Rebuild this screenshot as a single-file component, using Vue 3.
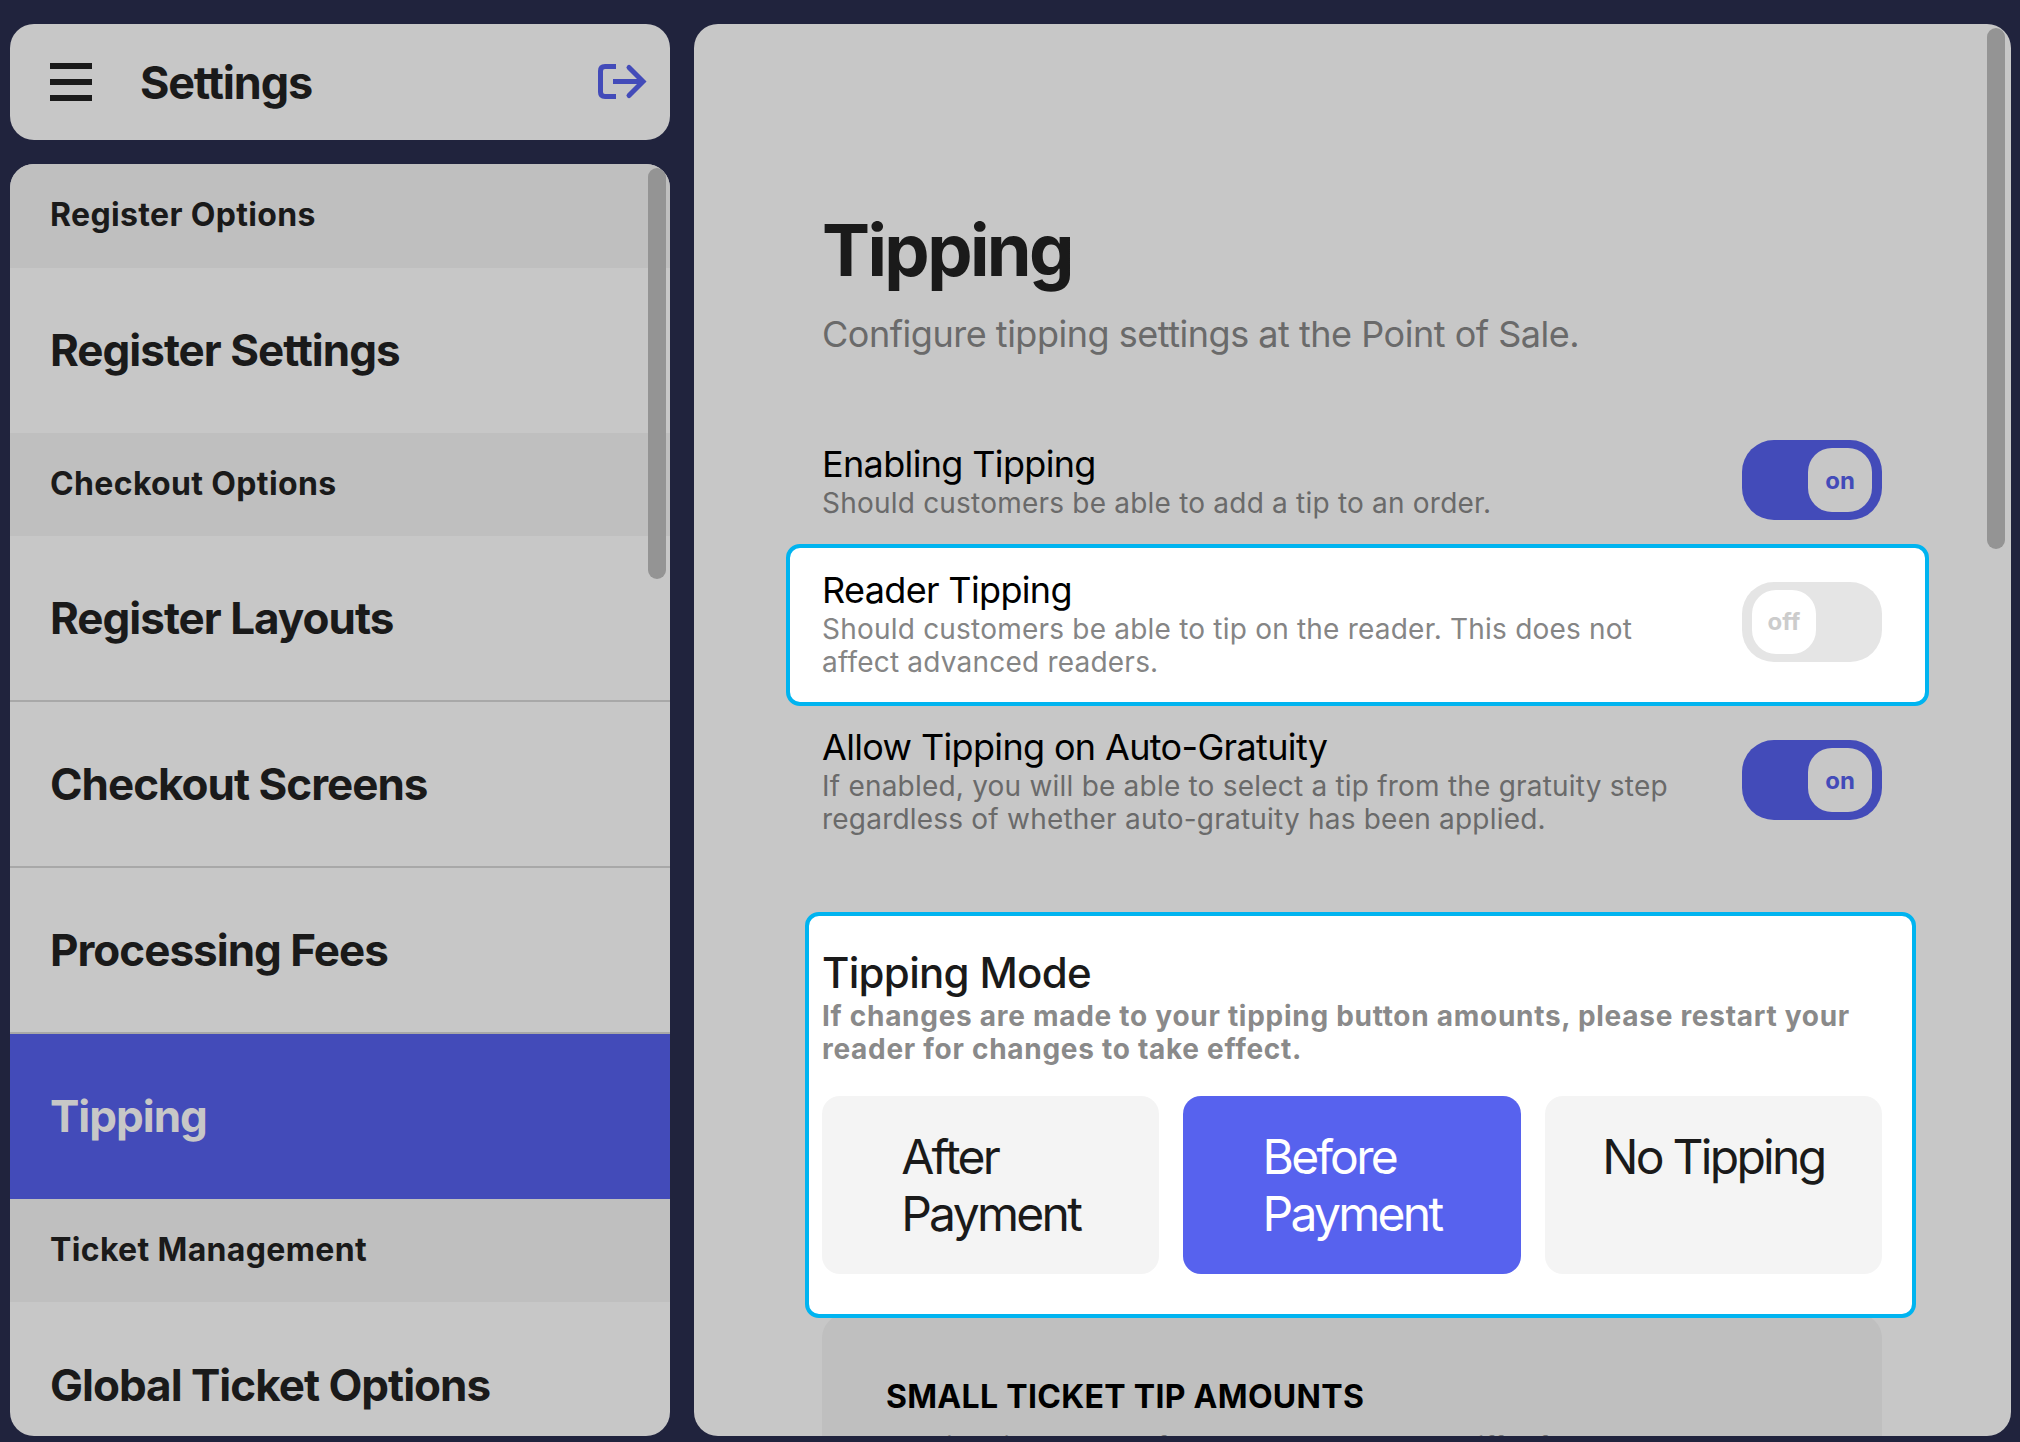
<template>
  <div class="page">
    <aside class="side">
      <header class="head">
        <div class="burger"><i></i><i></i><i></i></div>
        <h2>Settings</h2>
        <svg class="exit" viewBox="0 0 50 40" width="50" height="40" fill="none" stroke="#434bb9" stroke-width="5">
          <path d="M19 4.500H8Q3.500 4.500 3.500 9V30Q3.500 34.500 8 34.500H19" />
          <path d="M16 19.500H45" />
          <path d="M32 5.500L46 19.500L32 33.500" stroke-linecap="round" />
        </svg>
      </header>
      <nav class="list">
        <template v-for="row in rows" :key="row.label">
          <div v-if="row.section" class="section">{{ row.label }}</div>
          <div v-else class="item" :class="{ active: row.active, line: row.line }">{{ row.label }}</div>
        </template>
        <div class="bar side-bar"></div>
      </nav>
    </aside>

    <main class="main">
      <div class="bar main-bar"></div>
      <h1>Tipping</h1>
      <p class="sub">Configure tipping settings at the Point of Sale.</p>

      <div class="opt first">
        <div class="opt-text">
          <h3>Enabling Tipping</h3>
          <p>Should customers be able to add a tip to an order.</p>
        </div>
        <div class="toggle on"><span>on</span></div>
      </div>

      <div class="opt hl">
        <div class="opt-text">
          <h3>Reader Tipping</h3>
          <p>Should customers be able to tip on the reader. This does not affect advanced readers.</p>
        </div>
        <div class="toggle"><span>off</span></div>
      </div>

      <div class="opt">
        <div class="opt-text">
          <h3>Allow Tipping on Auto-Gratuity</h3>
          <p>If enabled, you will be able to select a tip from the gratuity step regardless of whether auto-gratuity has been applied.</p>
        </div>
        <div class="toggle on"><span>on</span></div>
      </div>

      <section class="mode">
        <h3>Tipping Mode</h3>
        <p>If changes are made to your tipping button amounts, please restart your reader for changes to take effect.</p>
        <div class="modes">
          <button v-for="m in modes" :key="m.label" :class="{ picked: m.picked }"><span>{{ m.label }}</span></button>
        </div>
      </section>

      <section class="amounts">
        <h4>SMALL TICKET TIP AMOUNTS</h4>
        <p>Provide tip amounts for small orders, these differ from the</p>
      </section>
    </main>
  </div>
</template>

<script setup>
const rows = [
  { label: 'Register Options', section: true },
  { label: 'Register Settings' },
  { label: 'Checkout Options', section: true },
  { label: 'Register Layouts', line: true },
  { label: 'Checkout Screens', line: true },
  { label: 'Processing Fees', line: true },
  { label: 'Tipping', active: true },
  { label: 'Ticket Management', section: true },
  { label: 'Global Ticket Options' }
]

const modes = [
  { label: 'After\nPayment' },
  { label: 'Before\nPayment', picked: true },
  { label: 'No Tipping' }
]
</script>

<style>
html, body { background: #20233d; overflow: hidden; }
</style>

<style scoped>
.page {
  display: flex;
  gap: 24px;
  height: 1442px;
  box-sizing: border-box;
  padding: 24px 9px 6px 10px;
  background: #20233d;
  font-family: Inter, "Liberation Sans", sans-serif;
  color: #1a1a1a;
}
.side {
  width: 660px;
  flex: none;
  display: flex;
  flex-direction: column;
  gap: 24px;
}
.head {
  height: 116px;
  display: flex;
  align-items: center;
  padding: 0 23px 0 40px;
  background: #c7c7c7;
  border-radius: 24px;
}
.burger {
  width: 42px;
  display: flex;
  flex-direction: column;
  gap: 10px;
}
.burger i {
  height: 6px;
  background: #1a1a1a;
}
.head h2 {
  margin: 0 0 0 48px;
  flex: 1;
  font-size: 45px;
  font-weight: 700;
  letter-spacing: -1.2px;
}
.list {
  position: relative;
  flex: 1;
  overflow: hidden;
  background: #c7c7c7;
  border-radius: 24px;
}
.section {
  height: 103.6px;
  box-sizing: border-box;
  padding: 31px 40px 0;
  background: #bfbfbf;
  font-size: 32px;
  font-weight: 700;
  line-height: 40px;
  letter-spacing: 0.35px;
}
.item {
  height: 165px;
  box-sizing: border-box;
  display: flex;
  align-items: center;
  padding: 0 40px;
  font-size: 44px;
  font-weight: 700;
  letter-spacing: -1px;
}
.item.line {
  height: 165.9px;
  border-bottom: 2px solid #a8a8a8;
}
.item.active {
  background: #434bb9;
  color: #c7c7c7;
}
.bar {
  position: absolute;
  width: 18px;
  background: #949494;
  border-radius: 9px;
}
.side-bar {
  top: 4px;
  right: 4px;
  height: 411px;
}
.main {
  position: relative;
  flex: 1;
  overflow: hidden;
  padding: 0 129px 0 128px;
  background: #c7c7c7;
  border-radius: 24px;
}
.main-bar {
  top: 4px;
  right: 6px;
  height: 521px;
}
h1 {
  margin: 182px 0 0;
  font-size: 72px;
  font-weight: 700;
  line-height: 88px;
  letter-spacing: -2.6px;
}
.sub {
  margin: 18px 0 0;
  font-size: 36px;
  line-height: 44px;
  color: #6a6a6a;
  letter-spacing: -0.48px;
}
.opt {
  display: flex;
  align-items: center;
  justify-content: space-between;
  gap: 40px;
  padding: 16px 0;
}
.first {
  margin-top: 68px;
}
.opt h3 {
  margin: 0;
  font-size: 36px;
  font-weight: 400;
  line-height: 46px;
  color: #000;
  letter-spacing: -0.65px;
}
.opt p {
  margin: 0;
  font-size: 28px;
  line-height: 33px;
  color: #6a6a6a;
  letter-spacing: 0.21px;
}
.opt-text {
  width: 880px;
}
.hl {
  margin: 8px -47px 2px -36px;
  padding: 19px 43px 23px 32px;
  background: #fff;
  border: 4px solid #00b4f0;
  border-radius: 14px;
}
.hl p {
  color: #858585;
}
.hl .toggle {
  margin-bottom: 3px;
}
.toggle {
  flex: none;
  position: relative;
  width: 140px;
  height: 80px;
  background: #e5e5e5;
  border-radius: 32px;
}
.toggle span {
  position: absolute;
  top: 8px;
  left: 10px;
  width: 64px;
  height: 64px;
  display: flex;
  align-items: center;
  justify-content: center;
  background: #fff;
  border-radius: 24px;
  font-size: 24px;
  font-weight: 700;
  color: #cccccc;
}
.toggle.on {
  background: #434bb9;
}
.toggle.on span {
  left: 66px;
  background: #c7c7c7;
  color: #434bb9;
}
.mode {
  position: relative;
  z-index: 1;
  margin: 60px -34px 0 -17px;
  padding: 33px 30px 40px 13px;
  background: #fff;
  border: 4px solid #00b4f0;
  border-radius: 14px;
}
.mode h3 {
  margin: 0;
  font-size: 42px;
  font-weight: 500;
  line-height: 48px;
  letter-spacing: -0.7px;
}
.mode p {
  margin: 3px 0 0;
  font-size: 28px;
  font-weight: 700;
  line-height: 33px;
  color: #8a8a8a;
  letter-spacing: 0.72px;
}
.modes {
  display: grid;
  grid-template-columns: repeat(3, minmax(0, 1fr));
  gap: 24px;
  margin-top: 30px;
}
.modes button {
  height: 178px;
  padding: 32px 0 0;
  border: 0;
  border-radius: 18px;
  background: #f4f4f4;
  display: flex;
  justify-content: center;
  align-items: flex-start;
  font: 400 48px/57px Inter, "Liberation Sans", sans-serif;
  letter-spacing: -2.7px;
  color: #1a1a1a;
  text-align: left;
  white-space: pre-line;
}
.modes button.picked {
  background: #5762ee;
  color: #fff;
}
.amounts {
  margin-top: -4px;
  padding: 63px 64px 60px;
  background: #bfbfbf;
  border-radius: 24px;
}
.amounts h4 {
  margin: 0;
  font-size: 32px;
  font-weight: 700;
  line-height: 40px;
  color: #000;
  letter-spacing: 0.3px;
}
.amounts p {
  margin: 14px 0 0;
  font-size: 28px;
  line-height: 33px;
  color: #707070;
}
</style>
